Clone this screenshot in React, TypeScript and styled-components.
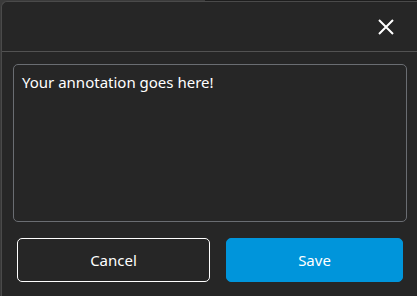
import React from 'react'
import styled, { createGlobalStyle } from 'styled-components'

const GlobalStyle = createGlobalStyle`
  html, body {
    margin: 0;
    padding: 0;
    background: #1d1d1d;
    height: 100%;
    overflow: hidden;
  }
  #root {
    height: 100%;
  }
`

const Backdrop = styled.div`
  height: 100%;
  padding: 1px 0 0 1px;
  box-sizing: border-box;
  background: linear-gradient(to right, #3a3a3a 0, #3a3a3a 205px, #1d1d1d 205px);
`

const Dialog = styled.div`
  height: 100%;
  box-sizing: border-box;
  background: #262626;
  border-top: 1px solid #4a4a4a;
  border-left: 1px solid #4a4a4a;
  border-radius: 6px 0 0 0;
  display: flex;
  flex-direction: column;
  font-family: 'Noto Sans', 'Open Sans', sans-serif;
  color: #ffffff;
`

const Header = styled.div`
  height: 49px;
  border-bottom: 1px solid #525252;
  display: flex;
  align-items: center;
  justify-content: flex-end;
  padding-right: 22px;
`

const CloseButton = styled.button`
  background: none;
  border: none;
  padding: 0;
  width: 18px;
  height: 18px;
  display: flex;
  align-items: center;
  justify-content: center;
  cursor: pointer;
`

const Body = styled.div`
  padding: 12px 10px 0 11px;
  display: flex;
  flex-direction: column;
  gap: 16px;
`

const Annotation = styled.textarea`
  height: 158px;
  box-sizing: border-box;
  background: #262626;
  border: 1px solid #6a6d72;
  border-radius: 5px;
  color: #ffffff;
  font-family: inherit;
  font-size: 15px;
  line-height: 20px;
  padding: 7px 8px;
  resize: none;
  outline: none;
`

const Actions = styled.div`
  display: flex;
  gap: 16px;
  padding: 0 4px;
`

const Button = styled.button<{ $primary?: boolean; $width: number }>`
  width: ${(p) => p.$width}px;
  height: 44px;
  box-sizing: border-box;
  border-radius: 5px;
  border: 1px solid ${(p) => (p.$primary ? '#0095db' : '#ffffff')};
  background: ${(p) => (p.$primary ? '#0095db' : 'transparent')};
  color: #ffffff;
  font-family: inherit;
  font-size: 15px;
  cursor: pointer;
`

const App: React.FC = () => {
  return (
    <>
      <GlobalStyle />
      <Backdrop>
        <Dialog>
          <Header>
            <CloseButton aria-label='close'>
              <svg width='16' height='16' viewBox='0 0 16 16'>
                <path d='M1 1 L15 15 M15 1 L1 15' stroke='#ffffff' strokeWidth='2' />
              </svg>
            </CloseButton>
          </Header>
          <Body>
            <Annotation defaultValue='Your annotation goes here!' />
            <Actions>
              <Button $width={193}>Cancel</Button>
              <Button $primary $width={177}>
                Save
              </Button>
            </Actions>
          </Body>
        </Dialog>
      </Backdrop>
    </>
  )
}

export default App
